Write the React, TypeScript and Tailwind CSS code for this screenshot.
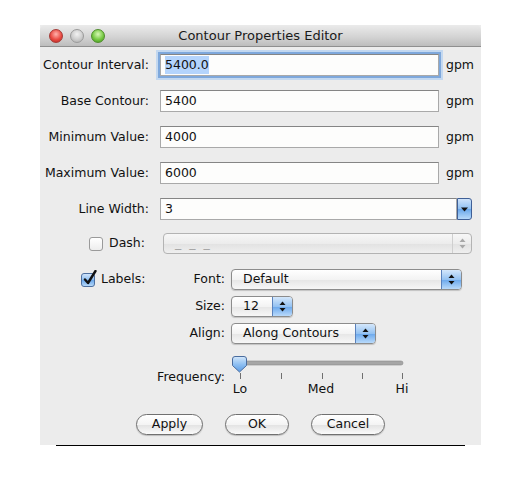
import React from "react";

const font = "font-['DejaVu_Sans',sans-serif]";

const UpDown = ({ color = "#111" }: { color?: string }) => (
  <svg width="7" height="11" viewBox="0 0 7 11">
    <path d="M0.5 4 L3.5 0.5 L6.5 4 Z" fill={color} />
    <path d="M0.5 7 L3.5 10.5 L6.5 7 Z" fill={color} />
  </svg>
);

const Field = ({ value, focused }: { value: string; focused?: boolean }) => (
  <div
    className={`flex h-[22px] w-[279px] items-center border border-[#a9a9a9] border-t-[#858585] bg-[#fdfdfc] pl-[4px] ${
      focused ? "shadow-[0_0_0_2px_#7ea8dc,0_0_0_4px_#c3d8f0]" : ""
    }`}
  >
    {focused ? <span className="bg-[#b4d4fc]">{value}</span> : value}
  </div>
);

const Popup = ({ label, className }: { label: string; className: string }) => (
  <div
    className={`flex h-[21px] items-stretch overflow-hidden rounded-[4px] border border-[#8c8c8c] bg-[linear-gradient(#ffffff,#f3f3f3_50%,#e6e6e6_52%,#f7f7f7)] shadow-[0_1px_1px_rgba(0,0,0,0.18)] ${className}`}
  >
    <span className="flex flex-1 items-center pl-[11px]">{label}</span>
    <span className="flex w-[20px] items-center justify-center border-l border-[#5a82bd] bg-[linear-gradient(#d4e7fb,#94c2f2_50%,#6ba8ec_52%,#b9dafb)]">
      <UpDown />
    </span>
  </div>
);

const Checkbox = ({ checked }: { checked?: boolean }) => (
  <span
    className={`relative inline-block h-[14px] w-[14px] shrink-0 rounded-[3px] border ${
      checked
        ? "border-[#4d6f9f] bg-[linear-gradient(#cfe3fa,#8ebff1_50%,#6aa7ea_52%,#b7d9fa)]"
        : "border-[#9a9a9a] bg-[linear-gradient(#ffffff,#ededed)]"
    }`}
  >
    {checked && (
      <svg
        className="absolute left-[1px] top-[-4px]"
        width="14"
        height="16"
        viewBox="0 0 14 16"
      >
        <path
          d="M2 9.5 L5 13 L12.5 1"
          fill="none"
          stroke="#111"
          strokeWidth="2.4"
          strokeLinecap="round"
          strokeLinejoin="round"
        />
      </svg>
    )}
  </span>
);

const Button = ({ label, className }: { label: string; className: string }) => (
  <button
    className={`flex h-[21px] items-center justify-center rounded-full border border-[#707070] bg-[linear-gradient(#ffffff,#f4f4f4_50%,#e4e4e4_55%,#fafafa)] text-[12.5px] text-[#111] shadow-[0_1px_1px_rgba(0,0,0,0.2)] ${className}`}
  >
    {label}
  </button>
);

const Row = ({ label, children }: { label: string; children: React.ReactNode }) => (
  <div className="flex h-[22px] items-center">
    <span className="w-[109px] whitespace-nowrap text-right">{label}</span>
    {children}
  </div>
);

const Slider = () => {
  const ticks = [9, 50, 91, 131, 171];
  return (
    <div className="relative h-[40px] w-[180px]">
      <svg className="absolute left-0 top-0" width="180" height="24" viewBox="0 0 180 24">
        <defs>
          <linearGradient id="thumb" x1="0" y1="0" x2="0" y2="1">
            <stop offset="0" stopColor="#d5e8fb" />
            <stop offset="0.5" stopColor="#8fc0f2" />
            <stop offset="1" stopColor="#5b9be4" />
          </linearGradient>
        </defs>
        <rect x="9" y="5" width="163" height="4" rx="2" fill="#a6a6a6" stroke="#8a8a8a" strokeWidth="0.6" />
        {ticks.map((t) => (
          <line key={t} x1={t + 0.5} y1="17" x2={t + 0.5} y2="23" stroke="#6f6f6f" strokeWidth="1" />
        ))}
        <path
          d="M1.5 3 Q1.5 0.5 4 0.5 H13 Q15.5 0.5 15.5 3 V9.5 L8.5 16 L1.5 9.5 Z"
          fill="url(#thumb)"
          stroke="#4a6c9e"
          strokeWidth="1"
        />
      </svg>
      <span className="absolute left-[9px] top-[25px] -translate-x-1/2 leading-[15px]">Lo</span>
      <span className="absolute left-[90px] top-[25px] -translate-x-1/2 leading-[15px]">Med</span>
      <span className="absolute left-[171px] top-[25px] -translate-x-1/2 leading-[15px]">Hi</span>
    </div>
  );
};

export default function App() {
  return (
    <div className={`h-[499px] w-[521px] bg-white pl-[40px] pt-[25px] text-[12.5px] text-[#111] ${font}`}>
      <div className="w-[441px] bg-[#ececec]">
        {/* title bar */}
        <div className="relative flex h-[22px] items-center rounded-t-[5px] border-b border-[#8f8f8f] bg-[linear-gradient(#ebebeb,#d2d2d2_60%,#bdbdbd)]">
          <div className="flex gap-[7px] pl-[9px]">
            <span className="h-[14px] w-[14px] rounded-full border border-[#a53a36] bg-[radial-gradient(circle_at_50%_35%,#ffb3ad,#ea4b43_55%,#b2221c)]" />
            <span className="h-[14px] w-[14px] rounded-full border border-[#9a9a9a] bg-[radial-gradient(circle_at_50%_35%,#f2f2f2,#cdcdcd_55%,#a9a9a9)]" />
            <span className="h-[14px] w-[14px] rounded-full border border-[#4f8d2c] bg-[radial-gradient(circle_at_50%_35%,#d7f7b5,#76c943_55%,#3d8f1a)]" />
          </div>
          <span className="absolute inset-x-0 text-center text-[13px] text-[#1a1a1a]">
            Contour Properties Editor
          </span>
        </div>

        {/* text fields */}
        <div className="flex flex-col gap-[14px] pt-[7px]">
          <Row label="Contour Interval:">
            <div className="ml-[11px]">
              <Field value="5400.0" focused />
            </div>
            <span className="ml-[7px]">gpm</span>
          </Row>
          <Row label="Base Contour:">
            <div className="ml-[11px]">
              <Field value="5400" />
            </div>
            <span className="ml-[7px]">gpm</span>
          </Row>
          <Row label="Minimum Value:">
            <div className="ml-[11px]">
              <Field value="4000" />
            </div>
            <span className="ml-[7px]">gpm</span>
          </Row>
          <Row label="Maximum Value:">
            <div className="ml-[11px]">
              <Field value="6000" />
            </div>
            <span className="ml-[7px]">gpm</span>
          </Row>
          <Row label="Line Width:">
            <div className="ml-[11px] flex h-[22px] w-[312px]">
              <div className="flex flex-1 items-center border border-[#a9a9a9] border-t-[#858585] bg-[#fdfdfc] pl-[4px]">
                3
              </div>
              <div className="flex w-[15px] items-center justify-center rounded-r-[3px] border border-[#3f5f96] bg-[linear-gradient(#cfe3fa,#8ebff1_50%,#6aa7ea_52%,#b7d9fa)]">
                <svg width="7" height="5" viewBox="0 0 7 5">
                  <path d="M0 0.5 H7 L3.5 4.5 Z" fill="#111" />
                </svg>
              </div>
            </div>
          </Row>
        </div>

        {/* dash */}
        <div className="mt-[13px] flex h-[21px] items-center">
          <div className="flex w-[109px] items-center justify-end gap-[6px] pr-[4px]">
            <Checkbox />
            <span>Dash:</span>
          </div>
          <div className="ml-[14px] flex h-[21px] w-[309px] items-stretch overflow-hidden rounded-[4px] border border-[#b3b3b3] bg-[linear-gradient(#f7f7f7,#ececec_50%,#e2e2e2_52%,#efefef)]">
            <span className="flex flex-1 items-center pl-[11px] tracking-[2px] text-[#a3a3a3]">_ _ _</span>
            <span className="flex w-[19px] items-center justify-center border-l border-[#cfcfcf]">
              <UpDown color="#a8a8a8" />
            </span>
          </div>
        </div>

        {/* labels */}
        <div className="mt-[15px] grid grid-cols-[64px_74px_1fr] items-center gap-x-[6px] gap-y-[6px] pl-[41px]">
          <div className="flex items-center gap-[6px]">
            <Checkbox checked />
            <span>Labels:</span>
          </div>
          <span className="text-right">Font:</span>
          <Popup label="Default" className="w-[231px]" />

          <span />
          <span className="text-right">Size:</span>
          <Popup label="12" className="w-[62px]" />

          <span />
          <span className="text-right">Align:</span>
          <Popup label="Along Contours" className="w-[145px]" />

          <span />
          <span className="mt-[6px] self-start pt-[13px] text-right leading-[15px]">Frequency:</span>
          <div className="mt-[6px]">
            <Slider />
          </div>
        </div>

        {/* buttons */}
        <div className="flex justify-center gap-[22px] pb-[10px] pt-[18px]">
          <Button label="Apply" className="w-[67px]" />
          <Button label="OK" className="w-[64px]" />
          <Button label="Cancel" className="w-[74px]" />
        </div>
      </div>
      <div className="ml-[16px] h-px w-[409px] bg-black" />
    </div>
  );
}
